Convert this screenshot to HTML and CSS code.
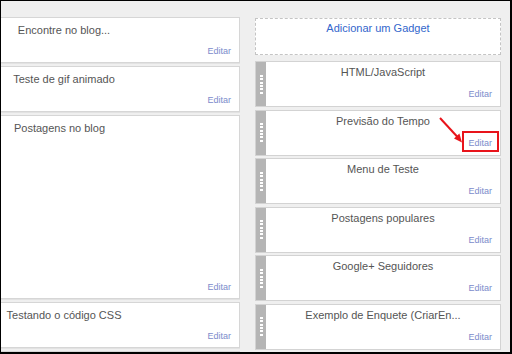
FILE: index.html
```html
<!DOCTYPE html>
<html>
<head>
<meta charset="utf-8">
<link rel="stylesheet" href="styles.css">
</head>
<body>
<div class="frame">
  <div class="layout">
    <div class="col-left">
      <div class="card">
        <div class="title">Encontre no blog...</div>
        <div class="edit">Editar</div>
      </div>
      <div class="card">
        <div class="title">Teste de gif animado</div>
        <div class="edit">Editar</div>
      </div>
      <div class="card tall">
        <div class="title shift">Postagens no blog</div>
        <div class="edit">Editar</div>
      </div>
      <div class="card">
        <div class="title">Testando o código CSS</div>
        <div class="edit">Editar</div>
      </div>
      <div class="card">
        <div class="title">&nbsp;</div>
        <div class="edit">&nbsp;</div>
      </div>
    </div>
    <div class="col-right">
      <div class="add">Adicionar um Gadget</div>
      <div class="gadget"><div class="handle"><span class="dots"></span></div><div class="body"><div class="title">HTML/JavaScript</div><div class="edit">Editar</div></div></div>
      <div class="gadget"><div class="handle"><span class="dots"></span></div><div class="body"><div class="title">Previsão do Tempo</div><div class="edit">Editar</div></div></div>
      <div class="gadget"><div class="handle"><span class="dots"></span></div><div class="body"><div class="title">Menu de Teste</div><div class="edit">Editar</div></div></div>
      <div class="gadget"><div class="handle"><span class="dots"></span></div><div class="body"><div class="title">Postagens populares</div><div class="edit">Editar</div></div></div>
      <div class="gadget"><div class="handle"><span class="dots"></span></div><div class="body"><div class="title">Google+ Seguidores</div><div class="edit">Editar</div></div></div>
      <div class="gadget"><div class="handle"><span class="dots"></span></div><div class="body"><div class="title">Exemplo de Enquete (CriarEn...</div><div class="edit">Editar</div></div></div>
      <div class="gadget"><div class="handle"><span class="dots"></span></div><div class="body"><div class="title">&nbsp;</div><div class="edit">&nbsp;</div></div></div>
    </div>
  </div>
  <svg class="annot" width="512" height="354" viewBox="0 0 512 354">
    <rect x="463" y="132" width="35" height="19" fill="none" stroke="#e8141b" stroke-width="2"/>
    <line x1="440" y1="118" x2="457.5" y2="137" stroke="#e8141b" stroke-width="2"/>
    <polygon points="462,142.5 454,138.6 459.4,133.6" fill="#e8141b"/>
  </svg>
</div>
</body>
</html>
```
FILE: styles.css
```css
html, body {
  margin: 0;
  padding: 0;
}
body {
  font-family: "Liberation Sans", Arial, sans-serif;
}
.frame {
  position: relative;
  width: 512px;
  height: 354px;
  box-sizing: border-box;
  border-style: solid;
  border-color: #000;
  border-width: 1px 2px 2px 1px;
  background: #efefef;
  overflow: hidden;
}
.layout {
  display: flex;
  align-items: flex-start;
  padding-top: 16px;
}
.col-left {
  width: 352px;
  margin-left: -113px;
  flex: none;
  display: flex;
  flex-direction: column;
  gap: 3px;
}
.card {
  box-sizing: border-box;
  height: 46px;
  background: #fff;
  border: 1px solid #d6d6d6;
  box-shadow: 0 1px 0 #e2e2e2;
  display: flex;
  flex-direction: column;
  justify-content: space-between;
  padding: 6px 8px 5px 8px;
}
.card.tall {
  height: 184px;
}
.title {
  font-size: 11px;
  line-height: 13px;
  color: #555;
  text-align: center;
  white-space: nowrap;
}
.title.shift {
  padding-right: 9px;
}
.edit {
  font-size: 9px;
  line-height: 11px;
  color: #7b8ccb;
  text-align: right;
}
.col-right {
  width: 246px;
  margin-left: 15px;
  flex: none;
  padding-top: 1px;
  display: flex;
  flex-direction: column;
  gap: 2.5px;
}
.add {
  box-sizing: border-box;
  height: 37px;
  margin-bottom: 3.5px;
  background: #fff;
  border: 1px dashed #c4c4c4;
  color: #3366cc;
  font-size: 11px;
  line-height: 13px;
  text-align: center;
  padding-top: 3px;
}
.gadget {
  box-sizing: border-box;
  height: 46px;
  background: #fff;
  border: 1px solid #d3d3d3;
  display: flex;
}
.handle {
  width: 10px;
  flex: none;
  background: #b5b5b5;
  display: flex;
  align-items: center;
  justify-content: center;
}
.dots {
  display: block;
  width: 3px;
  height: 19px;
  background: repeating-linear-gradient(to bottom, #fff 0, #fff 2px, transparent 2px, transparent 3.33px);
}
.body {
  flex: 1;
  display: flex;
  flex-direction: column;
  justify-content: space-between;
  padding: 4px 8px 6px 8px;
}
.annot {
  position: absolute;
  left: -1px;
  top: -1px;
  pointer-events: none;
}
```
